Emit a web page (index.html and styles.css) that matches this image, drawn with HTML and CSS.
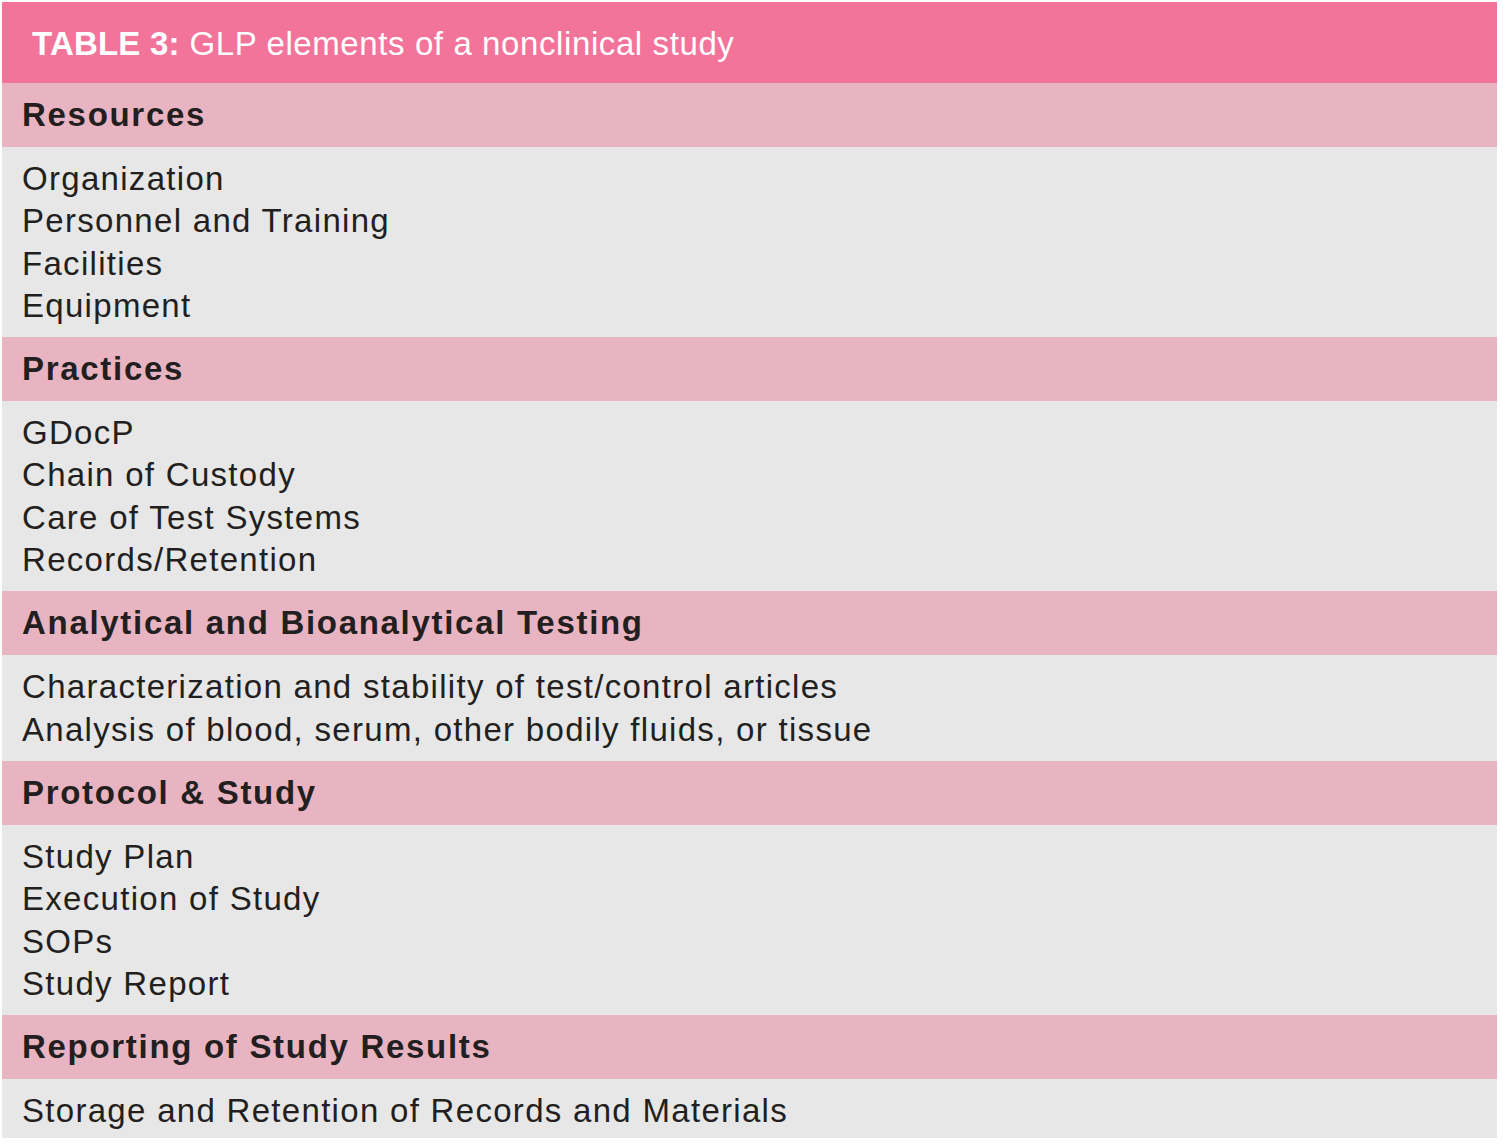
FILE: index.html
```html
<!DOCTYPE html>
<html>
<head>
<meta charset="utf-8">
<link rel="stylesheet" href="styles.css">
</head>
<body>
<div class="table">
  <div class="title"><b>TABLE 3:</b> GLP elements of a nonclinical study</div>
  <div class="band">Resources</div>
  <div class="items">
    <div>Organization</div>
    <div>Personnel and Training</div>
    <div>Facilities</div>
    <div>Equipment</div>
  </div>
  <div class="band">Practices</div>
  <div class="items">
    <div>GDocP</div>
    <div>Chain of Custody</div>
    <div>Care of Test Systems</div>
    <div>Records/Retention</div>
  </div>
  <div class="band">Analytical and Bioanalytical Testing</div>
  <div class="items">
    <div>Characterization and stability of test/control articles</div>
    <div>Analysis of blood, serum, other bodily fluids, or tissue</div>
  </div>
  <div class="band">Protocol &amp; Study</div>
  <div class="items">
    <div>Study Plan</div>
    <div>Execution of Study</div>
    <div>SOPs</div>
    <div>Study Report</div>
  </div>
  <div class="band">Reporting of Study Results</div>
  <div class="items last">
    <div>Storage and Retention of Records and Materials</div>
  </div>
</div>
</body>
</html>
```

FILE: styles.css
```css
html, body {
  margin: 0;
  padding: 0;
  background: #ffffff;
}
body {
  font-family: "Liberation Sans", Arial, sans-serif;
  color: #231f20;
}
.table {
  margin: 2px 0 0 2px;
  width: 1495px;
  display: flex;
  flex-direction: column;
}
.title {
  height: 81px;
  box-sizing: border-box;
  background: #f3749b;
  color: #ffffff;
  font-size: 33px;
  letter-spacing: 0.6px;
  display: flex;
  align-items: center;
  padding: 3px 0 0 30px;
  white-space: pre;
}
.title b {
  font-weight: bold;
  letter-spacing: 0.2px;
}
.band {
  height: 64px;
  box-sizing: border-box;
  background: #e8b4c2;
  font-weight: bold;
  font-size: 33px;
  display: flex;
  align-items: center;
  padding-left: 20px;
  letter-spacing: 1.7px;
}
.items {
  background: #e6e7e6;
  font-size: 33px;
  line-height: 42.3px;
  padding: 11px 0 10px 20px;
  letter-spacing: 1.3px;
}
.items.last {
  padding-bottom: 6px;
}
```
